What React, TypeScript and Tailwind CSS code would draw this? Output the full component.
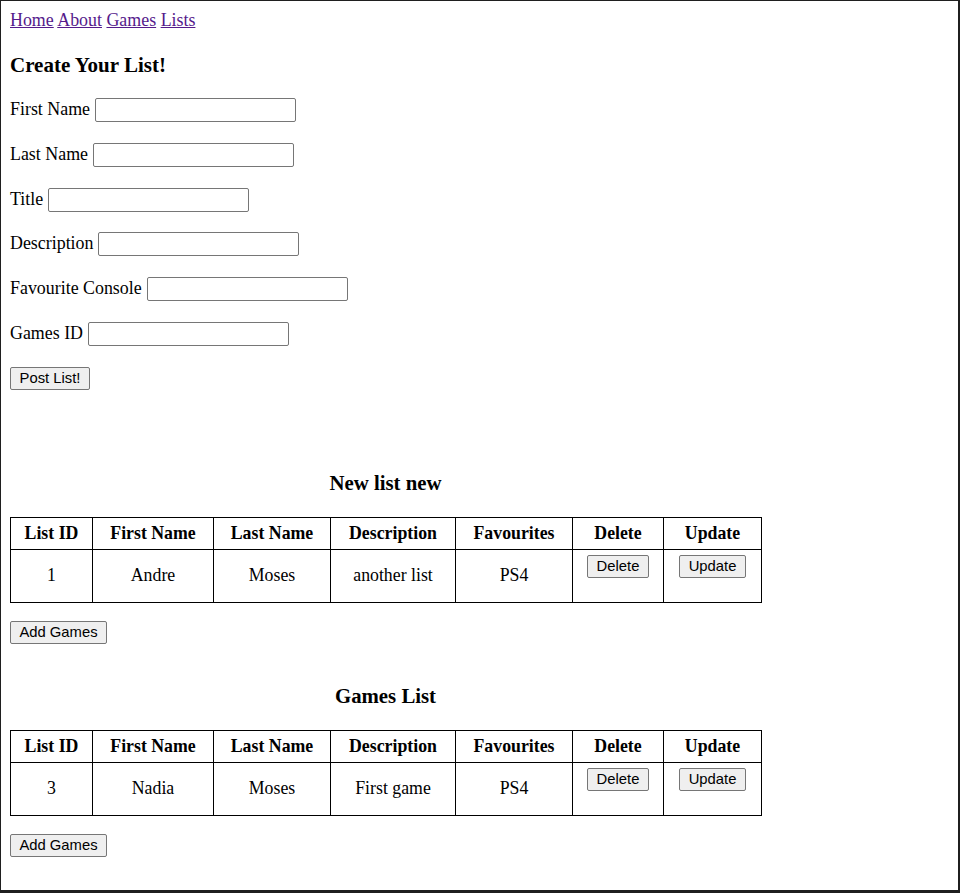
const lists = [
  {
    caption: "New list new",
    row: { id: 1, first: "Andre", last: "Moses", description: "another list", favourite: "PS4" },
  },
  {
    caption: "Games List",
    row: { id: 3, first: "Nadia", last: "Moses", description: "First game", favourite: "PS4" },
  },
];

const fields = [
  "First Name",
  "Last Name",
  "Title",
  "Description",
  "Favourite Console",
  "Games ID",
];

const btn =
  "h-[23px] bg-[#efefef] border border-[#767676] rounded-[2px] text-[14.8px] leading-none text-black font-['Liberation_Sans',Arial,sans-serif] flex items-center justify-center";

const headers = ["List ID", "First Name", "Last Name", "Description", "Favourites", "Delete", "Update"];
const colWidths = ["w-[82px]", "w-[121px]", "w-[117px]", "w-[125px]", "w-[117px]", "w-[91px]", "w-[98px]"];

const ListTable = ({ caption, row }: (typeof lists)[number]) => (
  <div>
    <div className="w-[751px] h-[24px] leading-[24px] text-[20.8px] font-bold text-center">{caption}</div>
    <table className="mt-[22px] table-fixed border-collapse w-[751px] text-[17.8px]">
      <colgroup>
        {colWidths.map((w, i) => (
          <col key={i} className={w} />
        ))}
      </colgroup>
      <thead>
        <tr>
          {headers.map((h) => (
            <th key={h} className="h-[32px] p-0 border border-black font-bold text-center align-middle leading-[20px]">
              {h}
            </th>
          ))}
        </tr>
      </thead>
      <tbody>
        <tr>
          {[row.id, row.first, row.last, row.description, row.favourite].map((v, i) => (
            <td key={i} className="h-[53px] p-0 pb-[2px] border border-black text-center align-middle leading-[20px]">
              {v}
            </td>
          ))}
          <td className="p-0 pt-[5px] border border-black align-top">
            <button className={btn + " w-[62px] mx-auto"}>Delete</button>
          </td>
          <td className="p-0 pt-[5px] border border-black align-top">
            <button className={btn + " w-[67px] mx-auto"}>Update</button>
          </td>
        </tr>
      </tbody>
    </table>
    <button className={btn + " mt-[18px] w-[97px]"}>Add Games</button>
  </div>
);

const App = () => {
  return (
    <div className="w-[960px] h-[893px] overflow-hidden border-t border-l border-r-2 border-b-[3px] border-[#1f1f1f] bg-white text-black font-['Liberation_Serif','Times_New_Roman',serif]">
      <div className="pt-[9px] pl-[9px]">
        <nav className="h-[20px] leading-[20px] text-[17.9px] text-[#551a8b]">
          <a href="#" className="underline">Home</a>{" "}
          <a href="#" className="underline">About</a>{" "}
          <a href="#" className="underline">Games</a>{" "}
          <a href="#" className="underline">Lists</a>
        </nav>

        <h3 className="mt-[23px] h-[24px] leading-[24px] text-[21px] font-bold">Create Your List!</h3>

        <form className="mt-[21px] flex flex-col gap-[20.8px] text-[17.9px]">
          {fields.map((f) => (
            <div key={f} className="h-[24px] flex items-center gap-[5px]">
              <label className="leading-[20px] -mt-[2px]">{f}</label>
              <input
                type="text"
                className="w-[201px] h-[24px] border border-[#767676] rounded-[2px] bg-white px-[2px]"
              />
            </div>
          ))}
        </form>

        <button className={btn + " mt-[21px] w-[80px]"}>Post List!</button>

        <div className="mt-[81px]">
          <ListTable {...lists[0]} />
        </div>
        <div className="mt-[40px]">
          <ListTable {...lists[1]} />
        </div>
      </div>
    </div>
  );
};

export default App;
